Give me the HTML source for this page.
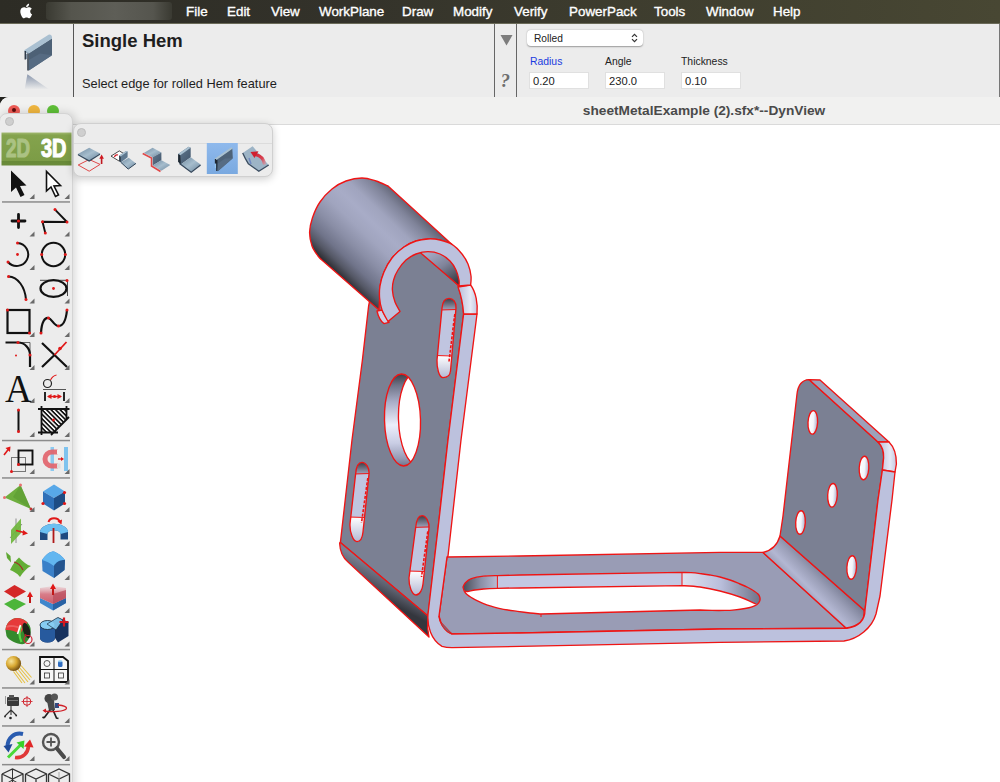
<!DOCTYPE html>
<html><head><meta charset="utf-8">
<style>
*{margin:0;padding:0;box-sizing:border-box}
html,body{width:1000px;height:782px;overflow:hidden;background:#fff;font-family:"Liberation Sans",sans-serif}
.abs{position:absolute}
#menubar{left:0;top:0;width:1000px;height:24px;background:linear-gradient(90deg,#2d2c25 0%,#33322a 35%,#3d3c2e 60%,#484733 100%);border-bottom:1px solid #6a6a58;color:#fff;font-size:13.400px;-webkit-text-stroke:0.350px #fff}
#menubar span{position:absolute;top:3.500px;white-space:nowrap}
#blur{left:46px;top:2px;width:126px;height:18px;background:linear-gradient(90deg,#3a3a32 0%,#55554d 20%,#5e5e57 55%,#55554e 85%,#3a3a32 100%);border-radius:3px}
#panel{left:0;top:24px;width:1000px;height:73px;background:#ececec}
#win{left:0;top:97px;width:1000px;height:685px;background:#fff;border-radius:9px 0 0 0;overflow:hidden}
#titlebar{left:0;top:0;width:1000px;height:28px;background:#f1f1f0;border-bottom:1px solid #dadada}
#title{left:404px;top:6px;width:600px;text-align:center;font-weight:bold;font-size:13.700px;color:#4a4a4a}
.tl{width:12px;height:12px;border-radius:6px;top:7.500px}
#lpal{left:-1px;top:112.500px;width:73.500px;height:680px;background:#ececec;border-radius:8px 8px 0 0;border:1px solid #d4d4d4;box-shadow:2px 0 10px rgba(0,0,0,.17)}
#spal{left:73px;top:123px;width:200px;height:54px;background:#ececec;border-radius:8px;border:1px solid #d0d0d0;box-shadow:0 2px 9px rgba(0,0,0,.2)}
.lbl{top:31.500px;font:10.400px "Liberation Sans",sans-serif;color:#222;white-space:nowrap}
.inp{top:48px;width:60px;height:17px;background:#fff;border:1px solid #e0e0e0;font:11.200px "Liberation Sans",sans-serif;color:#222;padding:2px 0 0 3px}
.dot{width:9px;height:9px;border-radius:5px;background:#cfcfcf;border:1px solid #bdbdbd}
</style></head><body>
<div id="menubar" class="abs">
<div id="blur" class="abs"></div>
<svg class="abs" style="left:19px;top:2px" width="16" height="18" viewBox="0 0 16 18"><path fill="#fff" d="M11.2 9.5c0-1.8 1.5-2.7 1.6-2.8-.9-1.3-2.200-1.400-2.700-1.500-1.100-.1-2.200.7-2.800.7-.6 0-1.500-.7-2.400-.6-1.200 0-2.400.7-3 1.800-1.300 2.200-.3 5.500.9 7.300.6.900 1.300 1.900 2.300 1.800.9 0 1.300-.6 2.400-.6 1.100 0 1.400.6 2.400.6 1 0 1.600-.9 2.200-1.800.7-1 1-2 1-2.100 0 0-1.900-.7-1.900-2.800zM9.400 4c.5-.6.800-1.400.7-2.300-.7 0-1.600.5-2.100 1.100-.5.500-.9 1.400-.8 2.200.800.100 1.700-.4 2.200-1z"/></svg>
<span style="left:186px">File</span><span style="left:227px">Edit</span><span style="left:271px">View</span><span style="left:319px">WorkPlane</span><span style="left:402px">Draw</span><span style="left:453px">Modify</span><span style="left:514px">Verify</span><span style="left:569px">PowerPack</span><span style="left:654px">Tools</span><span style="left:706px">Window</span><span style="left:773px">Help</span>
</div>
<div id="panel" class="abs">
<div class="abs" style="left:73px;top:0;width:1px;height:73px;background:#555"></div>
<div class="abs" style="left:999px;top:0;width:1px;height:73px;background:#777"></div>
<div class="abs" style="left:494px;top:0;width:1px;height:73px;background:#666"></div>
<div class="abs" style="left:516px;top:0;width:1px;height:73px;background:#666"></div>
<div class="abs" style="left:82px;top:5.700px;font:bold 18.5px 'Liberation Sans',sans-serif;color:#1e1e1e;white-space:nowrap">Single Hem</div>
<div class="abs" style="left:82px;top:51.700px;font:12.8px 'Liberation Sans',sans-serif;color:#1e1e1e;white-space:nowrap">Select edge for rolled Hem feature</div>
<svg class="abs" style="left:0;top:0" width="73" height="73" viewBox="0 0 73 73">
<defs><linearGradient id="refl" x1="0" y1="0" x2="0" y2="1"><stop offset="0" stop-color="#8a97ad"/><stop offset="1" stop-color="#ececec"/></linearGradient></defs>
<polygon points="28.800,29 52,14.300 52,31.200 28.800,46.600" fill="#4d6176"/>
<polygon points="28.800,36 40,29.500 52,31.200 28.800,46.600" fill="#566b82"/>
<path d="M24.600,27.300 L24.600,26 L48.500,10.800 Q51,10 52,12.500 L52,14.500 L28.800,29.500 L27.500,30 Z" fill="#aac0d1"/>
<path d="M24.600,27 L28.800,29.300" stroke="#8ea6ba" stroke-width="1"/>
<path d="M25.300,27 V35.500 M28,29.500 V46.500" stroke="#2e3a48" stroke-width="1.500" fill="none"/>
<path d="M26.700,30 V35" stroke="#6f8398" stroke-width="1"/>
<polygon points="27.400,50.200 49.300,65.500 24.600,65.500" fill="url(#refl)"/>
</svg>
<svg class="abs" style="left:500px;top:10px" width="13" height="12" viewBox="0 0 13 12"><polygon points="0.500,1 12.500,1 6.500,11.500" fill="#7d7d7d"/></svg>
<div class="abs" style="left:500.500px;top:45.500px;font:italic bold 19px 'Liberation Serif',serif;color:#6e6e6e">?</div>
<div class="abs" style="left:527px;top:6px;width:116px;height:16px;background:#fff;border-radius:4px;box-shadow:0 0.500px 1.500px rgba(0,0,0,.35)"></div>
<div class="abs" style="left:534px;top:8.500px;font:10.200px 'Liberation Sans',sans-serif;color:#222">Rolled</div>
<svg class="abs" style="left:631px;top:9px" width="7" height="10" viewBox="0 0 7 10"><path d="M1 3.800L3.500 1.300L6 3.800M1 6.200L3.500 8.700L6 6.200" stroke="#333" stroke-width="1.200" fill="none"/></svg>
<div class="abs lbl" style="left:530px;color:#1a3be0">Radius</div>
<div class="abs lbl" style="left:605px">Angle</div>
<div class="abs lbl" style="left:681px">Thickness</div>
<div class="abs inp" style="left:529px">0.20</div>
<div class="abs inp" style="left:605px">230.0</div>
<div class="abs inp" style="left:681px">0.10</div>
</div>
<div class="abs" style="left:0;top:97px;width:10px;height:10px;background:#23231f"></div>
<div id="win" class="abs">
<div id="titlebar" class="abs"></div>
<div id="title" class="abs">sheetMetalExample (2).sfx*--DynView</div>
<div class="abs tl" style="left:8px;background:#ee5b55"></div><div class="abs" style="left:12.200px;top:11.300px;width:3.400px;height:3.400px;border-radius:2px;background:#5c0c0c"></div>
<div class="abs tl" style="left:28px;background:#f0b63f"></div>
<div class="abs tl" style="left:47px;background:#5fc038"></div>
</div>
<!--MODEL--><svg class="abs" id="model" style="left:0;top:0" width="1000" height="782" viewBox="0 0 1000 782">
<defs>
<linearGradient id="gcyl" gradientUnits="userSpaceOnUse" x1="421" y1="216" x2="352" y2="288">
<stop offset="0" stop-color="#626576"/><stop offset="0.100" stop-color="#80849a"/><stop offset="0.250" stop-color="#a0a4be"/><stop offset="0.380" stop-color="#a8acc7"/><stop offset="0.520" stop-color="#a0a4be"/><stop offset="0.680" stop-color="#8a8ea6"/><stop offset="0.820" stop-color="#70748a"/><stop offset="0.910" stop-color="#555866"/><stop offset="0.970" stop-color="#3a3c44"/><stop offset="1" stop-color="#2c2d33"/></linearGradient>
<linearGradient id="gin" gradientUnits="userSpaceOnUse" x1="432" y1="250" x2="456" y2="286">
<stop offset="0" stop-color="#a6abc6"/><stop offset="0.450" stop-color="#7f8399"/><stop offset="1" stop-color="#2f3138"/></linearGradient>
<linearGradient id="gbendL" gradientUnits="userSpaceOnUse" x1="392" y1="575" x2="380" y2="598">
<stop offset="0" stop-color="#7b8093"/><stop offset="0.500" stop-color="#5c5f6d"/><stop offset="1" stop-color="#34363d"/></linearGradient>
<linearGradient id="gbendR" gradientUnits="userSpaceOnUse" x1="800" y1="594" x2="826" y2="568">
<stop offset="0" stop-color="#9497b0"/><stop offset="0.300" stop-color="#b3b7d2"/><stop offset="0.600" stop-color="#9a9eb7"/><stop offset="1" stop-color="#70748a"/></linearGradient>
<linearGradient id="ghole" x1="0" y1="0" x2="0" y2="1">
<stop offset="0" stop-color="#3c3e46"/><stop offset="0.120" stop-color="#6f7387"/><stop offset="0.300" stop-color="#a9adc7"/><stop offset="0.550" stop-color="#eceefa"/><stop offset="0.750" stop-color="#c9cde4"/><stop offset="0.920" stop-color="#9599b3"/><stop offset="1" stop-color="#70748a"/></linearGradient>
<linearGradient id="gslotcap" x1="0" y1="0" x2="0" y2="1">
<stop offset="0" stop-color="#3c3e46"/><stop offset="1" stop-color="#a0a4bd"/></linearGradient>
<linearGradient id="gslotbot" x1="0" y1="0" x2="0" y2="1">
<stop offset="0" stop-color="#ffffff"/><stop offset="1" stop-color="#b4b9d4"/></linearGradient>
<linearGradient id="gcorner" x1="0" y1="0" x2="1" y2="0">
<stop offset="0" stop-color="#b7bcd8"/><stop offset="0.650" stop-color="#e6e9f5"/><stop offset="1" stop-color="#c3c7e1"/></linearGradient>
<linearGradient id="gslotL" gradientUnits="userSpaceOnUse" x1="463" y1="0" x2="498" y2="0">
<stop offset="0" stop-color="#4a4c57"/><stop offset="0.500" stop-color="#8a8ea5"/><stop offset="1" stop-color="#b9bdd6"/></linearGradient>
<linearGradient id="gslotR" gradientUnits="userSpaceOnUse" x1="682" y1="0" x2="760" y2="0">
<stop offset="0" stop-color="#dfe2f0"/><stop offset="0.500" stop-color="#b9bedb"/><stop offset="1" stop-color="#6f7388"/></linearGradient>
<linearGradient id="ghs" x1="0" y1="0" x2="1" y2="0">
<stop offset="0" stop-color="#ffffff"/><stop offset="0.550" stop-color="#f4f5fa"/><stop offset="1" stop-color="#a9aeca"/></linearGradient>
</defs>
<path d="M419.0,249.0 L458.0,285.0 L461.0,296.0 L463.0,306.0 L463.6,314.0 L448.0,440.0 L439.0,520.0 L428.0,616.0 L340.4,542.4 L352.0,440.0 L362.4,360.0 L368.6,306.0 L372.0,290.0 L398.0,252.0 Z" fill="#7b8093" stroke="#ee1515" stroke-width="1.35" stroke-linejoin="round"/>
<g transform="rotate(-1.500 402.500 420)">
<ellipse cx="402.500" cy="420" rx="18" ry="46" fill="url(#ghole)"/>
<clipPath id="cph"><ellipse cx="402.500" cy="420" rx="18" ry="46"/></clipPath>
<ellipse cx="416.500" cy="419.500" rx="18" ry="46" fill="#fff" stroke="#ee1515" stroke-width="1.35" clip-path="url(#cph)"/>
<ellipse cx="402.500" cy="420" rx="18" ry="46" fill="none" stroke="#ee1515" stroke-width="1.35"/>
</g>
<clipPath id="cps1"><path d="M442.0,308.0 C442.5,302.0 445.0,298.4 449.0,298.4 C453.0,298.4 456.5,302.0 456.0,308.0 L450.5,371.0 C450.0,376.0 447.0,377.6 443.0,377.6 C439.0,377.6 436.7,368.0 437.0,360.0 Z"/></clipPath>
<path d="M442.0,308.0 C442.5,302.0 445.0,298.4 449.0,298.4 C453.0,298.4 456.5,302.0 456.0,308.0 L450.5,371.0 C450.0,376.0 447.0,377.6 443.0,377.6 C439.0,377.6 436.7,368.0 437.0,360.0 Z" fill="#c0c5e0"/>
<g clip-path="url(#cps1)">
<rect x="432.0" y="298.4" width="30" height="11.6" fill="url(#gslotcap)"/>
<rect x="432.0" y="355.5" width="30" height="22.1" fill="url(#gslotbot)"/>
<path d="M440.0,310.0 L458.0,309.5 M435.0,355.5 L452.5,356.0" stroke="#ee1515" stroke-width="1"/>
<path d="M454.8,314.0 L449.0,361.5" stroke="#ee1515" stroke-width="1.600" stroke-dasharray="3 1.500"/>
</g>
<path d="M442.0,308.0 C442.5,302.0 445.0,298.4 449.0,298.4 C453.0,298.4 456.5,302.0 456.0,308.0 L450.5,371.0 C450.0,376.0 447.0,377.6 443.0,377.6 C439.0,377.6 436.7,368.0 437.0,360.0 Z" fill="none" stroke="#ee1515" stroke-width="1.35"/>
<clipPath id="cps2"><path d="M355.6,474.0 C356.1,468.0 358.0,462.4 362.0,462.4 C366.0,462.4 369.5,468.0 369.0,474.0 L363.0,532.0 C362.5,537.0 361.0,541.6 357.0,541.6 C353.0,541.6 349.7,532.0 350.0,524.0 Z"/></clipPath>
<path d="M355.6,474.0 C356.1,468.0 358.0,462.4 362.0,462.4 C366.0,462.4 369.5,468.0 369.0,474.0 L363.0,532.0 C362.5,537.0 361.0,541.6 357.0,541.6 C353.0,541.6 349.7,532.0 350.0,524.0 Z" fill="#c0c5e0"/>
<g clip-path="url(#cps2)">
<rect x="345.0" y="462.4" width="30" height="11.6" fill="url(#gslotcap)"/>
<rect x="345.0" y="517.0" width="30" height="24.6" fill="url(#gslotbot)"/>
<path d="M353.6,474.0 L371.0,473.5 M348.0,517.0 L365.0,517.5" stroke="#ee1515" stroke-width="1"/>
<path d="M367.8,478.0 L361.5,523.0" stroke="#ee1515" stroke-width="1.600" stroke-dasharray="3 1.500"/>
</g>
<path d="M355.6,474.0 C356.1,468.0 358.0,462.4 362.0,462.4 C366.0,462.4 369.5,468.0 369.0,474.0 L363.0,532.0 C362.5,537.0 361.0,541.6 357.0,541.6 C353.0,541.6 349.7,532.0 350.0,524.0 Z" fill="none" stroke="#ee1515" stroke-width="1.35"/>
<clipPath id="cps3"><path d="M415.6,528.0 C416.1,522.0 418.0,515.6 422.0,515.6 C426.0,515.6 429.5,522.0 429.0,528.0 L423.0,584.0 C422.5,589.0 420.0,595.0 416.0,595.0 C412.0,595.0 408.7,586.0 409.0,578.0 Z"/></clipPath>
<path d="M415.6,528.0 C416.1,522.0 418.0,515.6 422.0,515.6 C426.0,515.6 429.5,522.0 429.0,528.0 L423.0,584.0 C422.5,589.0 420.0,595.0 416.0,595.0 C412.0,595.0 408.7,586.0 409.0,578.0 Z" fill="#c0c5e0"/>
<g clip-path="url(#cps3)">
<rect x="404.0" y="515.6" width="30" height="11.8" fill="url(#gslotcap)"/>
<rect x="404.0" y="571.0" width="30" height="24.0" fill="url(#gslotbot)"/>
<path d="M413.6,527.4 L431.0,526.9 M407.0,571.0 L425.0,571.5" stroke="#ee1515" stroke-width="1"/>
<path d="M427.8,531.4 L421.5,577.0" stroke="#ee1515" stroke-width="1.600" stroke-dasharray="3 1.500"/>
</g>
<path d="M415.6,528.0 C416.1,522.0 418.0,515.6 422.0,515.6 C426.0,515.6 429.5,522.0 429.0,528.0 L423.0,584.0 C422.5,589.0 420.0,595.0 416.0,595.0 C412.0,595.0 408.7,586.0 409.0,578.0 Z" fill="none" stroke="#ee1515" stroke-width="1.35"/>
<path d="M340.4,542.4 L428.0,616.0 L427.6,628.0 L429.0,637.0 L348,562 C343,558 340,551 339.600,543 Z" fill="url(#gbendL)" stroke="#ee1515" stroke-width="1.35" stroke-linejoin="round"/>
<path d="M447.0,557.0 L520.0,556.0 L720.0,552.4 L763.0,552.4 L846.0,628.0 L720.0,629.0 L520.0,633.0 L452.0,634.0 L442.0,626.0 L439.0,616.0 Z" fill="#999cb5" stroke="#ee1515" stroke-width="1.35" stroke-linejoin="round"/>
<path d="M463.0,587.0 C463.4,586.3 463.8,584.4 465.2,583.0 C466.6,581.6 468.3,579.8 471.4,578.7 C474.5,577.6 479.3,576.7 483.6,576.2 C487.9,575.7 495.1,575.7 497.4,575.6 L520,575 L682.0,572.4 C683.5,572.5 688.0,572.5 691.0,572.7 C694.0,572.9 696.8,573.2 700.0,573.6 C703.2,574.0 706.7,574.4 710.0,575.0 C713.3,575.6 716.7,576.2 720.0,577.0 C723.3,577.8 726.7,578.8 730.0,580.0 C733.3,581.2 737.0,582.8 740.0,584.0 C743.0,585.2 745.7,586.3 748.0,587.5 C750.3,588.7 752.2,589.8 754.0,591.0 C755.8,592.2 757.5,593.3 758.5,594.5 C759.5,595.7 759.8,596.8 760.0,598.0 C760.2,599.2 760.0,600.4 759.5,601.5 C759.0,602.6 758.2,603.6 757.0,604.5 C755.8,605.4 754.0,606.1 752.0,606.8 C750.0,607.5 747.8,608.0 745.0,608.5 C742.2,609.0 738.3,609.5 735.0,609.8 C731.7,610.1 728.8,610.3 725.0,610.4 C721.2,610.5 716.2,610.5 712.0,610.4 C707.8,610.3 702.0,610.1 700.0,610.0 L541.0,614.0 C539.2,613.8 533.9,613.5 530.0,613.0 C526.1,612.5 521.1,611.8 517.4,611.3 C513.7,610.8 511.1,610.5 508.0,610.0 C504.9,609.5 501.8,608.9 499.0,608.3 C496.2,607.7 493.6,607.0 491.0,606.2 C488.4,605.4 485.9,604.6 483.6,603.7 C481.3,602.8 479.1,601.7 477.0,600.7 C474.9,599.7 473.0,598.5 471.3,597.5 C469.6,596.5 468.1,595.5 467.0,594.5 C465.9,593.5 465.1,592.6 464.4,591.4 C463.7,590.1 463.2,587.7 463.0,587.0 Z" fill="#fff"/>
<clipPath id="cpbs"><path d="M463.0,587.0 C463.4,586.3 463.8,584.4 465.2,583.0 C466.6,581.6 468.3,579.8 471.4,578.7 C474.5,577.6 479.3,576.7 483.6,576.2 C487.9,575.7 495.1,575.7 497.4,575.6 L520,575 L682.0,572.4 C683.5,572.5 688.0,572.5 691.0,572.7 C694.0,572.9 696.8,573.2 700.0,573.6 C703.2,574.0 706.7,574.4 710.0,575.0 C713.3,575.6 716.7,576.2 720.0,577.0 C723.3,577.8 726.7,578.8 730.0,580.0 C733.3,581.2 737.0,582.8 740.0,584.0 C743.0,585.2 745.7,586.3 748.0,587.5 C750.3,588.7 752.2,589.8 754.0,591.0 C755.8,592.2 757.5,593.3 758.5,594.5 C759.5,595.7 759.8,596.8 760.0,598.0 C760.2,599.2 760.0,600.4 759.5,601.5 C759.0,602.6 758.2,603.6 757.0,604.5 C755.8,605.4 754.0,606.1 752.0,606.8 C750.0,607.5 747.8,608.0 745.0,608.5 C742.2,609.0 738.3,609.5 735.0,609.8 C731.7,610.1 728.8,610.3 725.0,610.4 C721.2,610.5 716.2,610.5 712.0,610.4 C707.8,610.3 702.0,610.1 700.0,610.0 L541.0,614.0 C539.2,613.8 533.9,613.5 530.0,613.0 C526.1,612.5 521.1,611.8 517.4,611.3 C513.7,610.8 511.1,610.5 508.0,610.0 C504.9,609.5 501.8,608.9 499.0,608.3 C496.2,607.7 493.6,607.0 491.0,606.2 C488.4,605.4 485.9,604.6 483.6,603.7 C481.3,602.8 479.1,601.7 477.0,600.7 C474.9,599.7 473.0,598.5 471.3,597.5 C469.6,596.5 468.1,595.5 467.0,594.5 C465.9,593.5 465.1,592.6 464.4,591.4 C463.7,590.1 463.2,587.7 463.0,587.0 Z"/></clipPath>
<path d="M463.0,587.0 C463.4,586.3 463.8,584.4 465.2,583.0 C466.6,581.6 468.3,579.8 471.4,578.7 C474.5,577.6 479.3,576.7 483.6,576.2 C487.9,575.7 495.1,575.7 497.4,575.6 L497.400,588.300 C495.1,588.4 487.3,588.7 483.6,589.0 C479.9,589.3 477.7,589.6 475.0,590.0 C472.3,590.4 469.2,591.3 467.5,591.5 C465.8,591.7 465.0,591.1 464.5,591.0 Z" fill="url(#gslotL)"/>
<path d="M497.400,575.600 L520,575 L682,572.400 L682,585.600 L520,588 L497.400,588.300 Z" fill="#c3c8e3"/>
<path d="M682.0,572.4 C683.5,572.5 688.0,572.5 691.0,572.7 C694.0,572.9 696.8,573.2 700.0,573.6 C703.2,574.0 706.7,574.4 710.0,575.0 C713.3,575.6 716.7,576.2 720.0,577.0 C723.3,577.8 726.7,578.8 730.0,580.0 C733.3,581.2 737.0,582.8 740.0,584.0 C743.0,585.2 745.7,586.3 748.0,587.5 C750.3,588.7 752.2,589.8 754.0,591.0 C755.8,592.2 757.5,593.3 758.5,594.5 C759.5,595.7 759.8,596.8 760.0,598.0 C760.2,599.2 760.0,600.4 759.5,601.5 C759.0,602.6 757.4,604.0 757.0,604.5 L756,604 C753.3,602.8 746.0,599.2 740.0,597.0 C734.0,594.8 726.7,592.7 720.0,591.0 C713.3,589.3 706.3,587.9 700.0,587.0 C693.7,586.1 685.0,585.8 682.0,585.6 Z" fill="url(#gslotR)"/>
<path d="M464.5,591.0 C465.0,591.1 465.8,591.7 467.5,591.5 C469.2,591.3 472.3,590.4 475.0,590.0 C477.7,589.6 479.9,589.3 483.6,589.0 C487.3,588.7 491.3,588.5 497.4,588.3 C503.5,588.1 516.2,588.0 520.0,588.0 L682.0,585.6 C685.0,585.8 693.7,586.1 700.0,587.0 C706.3,587.9 713.3,589.3 720.0,591.0 C726.7,592.7 734.0,594.8 740.0,597.0 C746.0,599.2 753.3,602.8 756.0,604.0" fill="none" stroke="#ee1515" stroke-width="1.35" clip-path="url(#cpbs)"/>
<path d="M497.400,575.600 L497.400,588.300 M682,572.400 L682,585.600 M541,614 L541,617" fill="none" stroke="#ee1515" stroke-width="1"/>
<path d="M463.0,587.0 C463.4,586.3 463.8,584.4 465.2,583.0 C466.6,581.6 468.3,579.8 471.4,578.7 C474.5,577.6 479.3,576.7 483.6,576.2 C487.9,575.7 495.1,575.7 497.4,575.6 L520,575 L682.0,572.4 C683.5,572.5 688.0,572.5 691.0,572.7 C694.0,572.9 696.8,573.2 700.0,573.6 C703.2,574.0 706.7,574.4 710.0,575.0 C713.3,575.6 716.7,576.2 720.0,577.0 C723.3,577.8 726.7,578.8 730.0,580.0 C733.3,581.2 737.0,582.8 740.0,584.0 C743.0,585.2 745.7,586.3 748.0,587.5 C750.3,588.7 752.2,589.8 754.0,591.0 C755.8,592.2 757.5,593.3 758.5,594.5 C759.5,595.7 759.8,596.8 760.0,598.0 C760.2,599.2 760.0,600.4 759.5,601.5 C759.0,602.6 758.2,603.6 757.0,604.5 C755.8,605.4 754.0,606.1 752.0,606.8 C750.0,607.5 747.8,608.0 745.0,608.5 C742.2,609.0 738.3,609.5 735.0,609.8 C731.7,610.1 728.8,610.3 725.0,610.4 C721.2,610.5 716.2,610.5 712.0,610.4 C707.8,610.3 702.0,610.1 700.0,610.0 L541.0,614.0 C539.2,613.8 533.9,613.5 530.0,613.0 C526.1,612.5 521.1,611.8 517.4,611.3 C513.7,610.8 511.1,610.5 508.0,610.0 C504.9,609.5 501.8,608.9 499.0,608.3 C496.2,607.7 493.6,607.0 491.0,606.2 C488.4,605.4 485.9,604.6 483.6,603.7 C481.3,602.8 479.1,601.7 477.0,600.7 C474.9,599.7 473.0,598.5 471.3,597.5 C469.6,596.5 468.1,595.5 467.0,594.5 C465.9,593.5 465.1,592.6 464.4,591.4 C463.7,590.1 463.2,587.7 463.0,587.0 Z" fill="none" stroke="#ee1515" stroke-width="1.35"/>
<path d="M763,552.400 C770,551 777,546 780,536 L864,610 C865,618 861,626 846,628 Z" fill="url(#gbendR)" stroke="#ee1515" stroke-width="1.35" stroke-linejoin="round"/>
<path d="M780,536 L783,516 L797,394 C798,385 802,380 809,379.600 L878,442 C882,446 884,452 883.600,458 L882.400,470 L878,500 L865,610 L864,610 Z" fill="#7b8093" stroke="#ee1515" stroke-width="1.35" stroke-linejoin="round"/>
<path d="M809,379.600 L820,380 L889,442 L878,442 Z" fill="#9da1ba" stroke="#ee1515" stroke-width="1.35" stroke-linejoin="round"/>
<path d="M878,442 L889,442 C894,447 896.500,455 896.400,464 L895,472 L882.400,470 L883.600,458 C884,452 882,446 878,442 Z" fill="url(#gcorner)" stroke="#ee1515" stroke-width="1.35" stroke-linejoin="round"/>
<ellipse cx="812.8" cy="422.4" rx="4.800" ry="11.800" fill="url(#ghs)" stroke="#ee1515" stroke-width="1.35" transform="rotate(3 812.8 422.4)"/>
<ellipse cx="864.0" cy="468.0" rx="4.800" ry="11.800" fill="url(#ghs)" stroke="#ee1515" stroke-width="1.35" transform="rotate(3 864.0 468.0)"/>
<ellipse cx="832.5" cy="495.3" rx="4.800" ry="11.800" fill="url(#ghs)" stroke="#ee1515" stroke-width="1.35" transform="rotate(3 832.5 495.3)"/>
<ellipse cx="800.5" cy="522.5" rx="4.800" ry="11.800" fill="url(#ghs)" stroke="#ee1515" stroke-width="1.35" transform="rotate(3 800.5 522.5)"/>
<ellipse cx="851.7" cy="567.5" rx="4.800" ry="11.800" fill="url(#ghs)" stroke="#ee1515" stroke-width="1.35" transform="rotate(3 851.7 567.5)"/>
<path d="M463.600,314 L448,440 L439,520 L428,614 C427,626 431,640 442,646.400 C446,647.500 449,647.600 452,647.600 L520,646.400 L720,642.400 L844,641 C858,639 872,628 876,614 L880,596 L892,500 L895,472 L882.400,470 L878,500 L865,610 C865,618 861,626 847,628.400 L720,629 L520,633 L452,634 C446,632 440,625 439,616 L447,557 L448,556 L461,440 L477,314 Z" fill="#bcc1dd" stroke="#ee1515" stroke-width="1.35" stroke-linejoin="round"/>
<path d="M439,616 C440,625 446,632 452,634 L440,621 Z" fill="#6d7083" stroke="#ee1515" stroke-width="0.800"/>
<path d="M458,287 C461,295 463,305 463.600,314 L477,314 C478,304 476,292 470.600,285 Z" fill="url(#gcorner)" stroke="#ee1515" stroke-width="1.35" stroke-linejoin="round"/>
<path d="M388.0,186.0 C386.0,185.2 380.3,182.3 376.0,181.0 C371.7,179.7 367.0,178.0 362.0,178.0 C357.0,178.0 351.0,179.2 346.0,181.0 C341.0,182.8 336.3,185.5 332.0,189.0 C327.7,192.5 323.3,197.2 320.0,202.0 C316.7,206.8 314.1,213.0 312.4,218.0 C310.7,223.0 309.7,227.3 309.6,232.0 C309.5,236.7 310.6,242.0 312.0,246.0 C313.4,250.0 316.2,253.5 318.0,256.0 C319.8,258.5 322.2,260.2 323.0,261.0 L379.0,310.0 L379.6,298.0 C379.7,296.0 379.3,290.3 380.0,286.0 C380.7,281.7 382.0,276.7 384.0,272.0 C386.0,267.3 388.7,262.2 392.0,258.0 C395.3,253.8 400.0,249.8 404.0,247.0 C408.0,244.2 412.0,242.3 416.0,241.0 C420.0,239.7 424.0,239.2 428.0,239.0 C432.0,238.8 436.0,239.1 440.0,240.0 C444.0,240.9 450.0,243.7 452.0,244.4 Z" fill="url(#gcyl)" stroke="#ee1515" stroke-width="1.35" stroke-linejoin="round"/>
<path d="M377,311 C378,316 381,322 384,323.600 L389,322.400 L382,310 Z" fill="#cdd1e8" stroke="#ee1515" stroke-width="1.35" stroke-linejoin="round"/>
<path d="M419,251.500 L458,285 L465,285 L465,278 L461,266 L455,256 L442,247 L428,245 L418,247 Z" fill="url(#gin)" stroke="#ee1515" stroke-width="1.35" stroke-linejoin="round"/>
<path d="M388.0,321.4 C387.0,319.5 383.4,313.9 382.0,310.0 C380.6,306.1 379.9,302.0 379.6,298.0 C379.3,294.0 379.3,290.3 380.0,286.0 C380.7,281.7 382.0,276.7 384.0,272.0 C386.0,267.3 388.7,262.2 392.0,258.0 C395.3,253.8 400.0,249.8 404.0,247.0 C408.0,244.2 412.0,242.3 416.0,241.0 C420.0,239.7 424.0,239.2 428.0,239.0 C432.0,238.8 436.0,239.1 440.0,240.0 C444.0,240.9 448.3,242.1 452.0,244.4 C455.7,246.7 459.3,250.7 462.0,254.0 C464.7,257.3 466.5,260.3 468.0,264.0 C469.5,267.7 470.6,272.5 471.0,276.0 C471.4,279.5 470.7,283.5 470.6,285.0 L459.0,286.0 C459.0,285.0 459.5,282.7 459.0,280.0 C458.5,277.3 457.5,273.2 456.0,270.0 C454.5,266.8 452.7,263.7 450.0,261.0 C447.3,258.3 443.7,255.6 440.0,254.0 C436.3,252.4 432.0,251.6 428.0,251.6 C424.0,251.6 419.7,252.6 416.0,254.0 C412.3,255.4 409.0,257.3 406.0,260.0 C403.0,262.7 400.1,266.7 398.0,270.0 C395.9,273.3 394.5,276.7 393.6,280.0 C392.7,283.3 392.2,286.3 392.4,290.0 C392.6,293.7 393.7,298.4 395.0,302.0 C396.3,305.6 399.2,309.8 400.0,311.4 Z" fill="#bcc1dd" stroke="#ee1515" stroke-width="1.35" stroke-linejoin="round"/>
</svg><!--/MODEL-->
<div id="lpal" class="abs"></div>
<div class="abs dot" style="left:5px;top:117px"></div>
<!--PAL--><svg class="abs" style="left:0;top:0" width="80" height="782" viewBox="0 0 80 782">
<defs>
<linearGradient id="g23" x1="0" y1="0" x2="0" y2="1"><stop offset="0" stop-color="#a3ba72"/><stop offset="0.080" stop-color="#84a34d"/><stop offset="0.860" stop-color="#7c9c46"/><stop offset="0.870" stop-color="#688a38"/><stop offset="1" stop-color="#6b8c3b"/></linearGradient>
<linearGradient id="gpink" x1="0" y1="0" x2="0" y2="1"><stop offset="0" stop-color="#e6a0aa" stop-opacity="0.250"/><stop offset="0.450" stop-color="#d46a78" stop-opacity="0.850"/><stop offset="1" stop-color="#cc5a6a"/></linearGradient>
<radialGradient id="ggold" cx="0.350" cy="0.350" r="0.700"><stop offset="0" stop-color="#f6e39a"/><stop offset="0.500" stop-color="#d9a932"/><stop offset="1" stop-color="#6e4a10"/></radialGradient>
<pattern id="hatch" width="3.200" height="3.200" patternUnits="userSpaceOnUse" patternTransform="rotate(45)"><rect width="3.200" height="3.200" fill="#fff"/><rect width="3.200" height="1.700" fill="#111"/></pattern>
</defs>
<rect x="1.500" y="132.500" width="70" height="33" fill="url(#g23)"/>
<text x="6" y="157" font-family="Liberation Sans, sans-serif" font-weight="bold" font-size="25" fill="#abc283" stroke="#abc283" stroke-width="1.100" stroke-linejoin="round" textLength="24" lengthAdjust="spacingAndGlyphs">2D</text>
<text x="41" y="157" font-family="Liberation Sans, sans-serif" font-weight="bold" font-size="25" fill="#ffffff" stroke="#ffffff" stroke-width="1.100" stroke-linejoin="round" textLength="25.500" lengthAdjust="spacingAndGlyphs">3D</text>
<path d="M11,170.500 L11,192 L16,187.500 L20.500,197 L24.500,195 L20,186 L26.500,185.500 Z" fill="#111"/>
<path d="M46.500,171.500 L46.500,191 L51,187 L55.500,196.500 L58.500,195 L54,186 L60.500,185.500 Z" fill="#fff" stroke="#111" stroke-width="1.600" stroke-linejoin="miter"/>
<polygon points="29.5,199.0 34.5,199.0 34.5,194.0" fill="#6a6a6a"/>
<polygon points="64.5,199.0 69.5,199.0 69.5,194.0" fill="#6a6a6a"/>
<rect x="2" y="201.2" width="68" height="1.500" fill="#8c8c8c"/>
<path d="M18.500,214.500 V227.500 M12,221 H25" stroke="#111" stroke-width="2.800" stroke-linecap="round"/>
<circle cx="18.5" cy="221.0" r="1.6" fill="#e01818"/>
<path d="M55,209.600 L67,222 L42.500,221.700 L45.300,233" fill="none" stroke="#111" stroke-width="1.900" stroke-linejoin="round"/>
<circle cx="55.0" cy="209.6" r="1.5" fill="#e01818"/>
<circle cx="67.0" cy="222.0" r="1.5" fill="#e01818"/>
<circle cx="42.5" cy="221.7" r="1.5" fill="#e01818"/>
<circle cx="45.3" cy="233.0" r="1.5" fill="#e01818"/>
<polygon points="29.5,236.5 34.5,236.5 34.5,231.5" fill="#6a6a6a"/>
<polygon points="64.5,236.5 69.5,236.5 69.5,231.5" fill="#6a6a6a"/>
<path d="M17.500,243 A11.500,11.500 0 1 1 8,262" fill="none" stroke="#111" stroke-width="2"/>
<circle cx="17.5" cy="243.0" r="1.5" fill="#e01818"/>
<circle cx="17.5" cy="254.5" r="1.4" fill="#e01818"/>
<circle cx="8.0" cy="262.0" r="1.5" fill="#e01818"/>
<circle cx="53.500" cy="254.500" r="11.700" fill="none" stroke="#111" stroke-width="2"/>
<circle cx="41.7" cy="254.5" r="1.5" fill="#e01818"/>
<circle cx="65.3" cy="254.5" r="1.5" fill="#e01818"/>
<polygon points="29.5,270.0 34.5,270.0 34.5,265.0" fill="#6a6a6a"/>
<polygon points="64.5,270.0 69.5,270.0 69.5,265.0" fill="#6a6a6a"/>
<path d="M8.500,276.500 C18,277 25,287 26,299.500" fill="none" stroke="#111" stroke-width="2"/>
<circle cx="8.5" cy="276.5" r="1.5" fill="#e01818"/>
<circle cx="26.0" cy="299.5" r="1.5" fill="#e01818"/>
<path d="M40,280.300 H67.500 V296" fill="none" stroke="#333" stroke-width="0.900"/>
<ellipse cx="53.500" cy="288.500" rx="13" ry="8.300" fill="none" stroke="#111" stroke-width="2.200"/>
<circle cx="53.5" cy="288.5" r="1.4" fill="#e01818"/>
<circle cx="67.0" cy="280.5" r="1.5" fill="#e01818"/>
<polygon points="29.5,303.5 34.5,303.5 34.5,298.5" fill="#6a6a6a"/>
<polygon points="64.5,303.5 69.5,303.5 69.5,298.5" fill="#6a6a6a"/>
<rect x="7.500" y="310" width="22" height="23" fill="none" stroke="#111" stroke-width="2.200"/>
<circle cx="7.5" cy="310.0" r="1.5" fill="#e01818"/>
<circle cx="29.5" cy="333.0" r="1.5" fill="#e01818"/>
<path d="M41,333 C41.500,322 45,317 48.500,318 C52,319 54,326 58.500,326 C63,326 66,320 67,310" fill="none" stroke="#111" stroke-width="2.200"/>
<circle cx="41.0" cy="333.0" r="1.5" fill="#e01818"/>
<circle cx="48.5" cy="318.0" r="1.5" fill="#e01818"/>
<circle cx="58.5" cy="326.0" r="1.5" fill="#e01818"/>
<circle cx="67.0" cy="310.0" r="1.5" fill="#e01818"/>
<polygon points="29.5,337.0 34.5,337.0 34.5,332.0" fill="#6a6a6a"/>
<polygon points="64.5,337.0 69.5,337.0 69.5,332.0" fill="#6a6a6a"/>
<path d="M18,342.500 H30 V355" fill="none" stroke="#555" stroke-width="0.900"/>
<path d="M5.500,342.500 H18 A12,12.500 0 0 1 30,355 V367" fill="none" stroke="#111" stroke-width="2.200"/>
<circle cx="18.0" cy="342.5" r="1.5" fill="#e01818"/>
<circle cx="30.0" cy="355.0" r="1.5" fill="#e01818"/>
<circle cx="16.0" cy="355.5" r="1.0" fill="#e01818"/>
<path d="M42,343 L67,367 M42,367 L54.500,355" stroke="#111" stroke-width="2.200"/>
<path d="M54.500,355 L66.500,342" stroke="#e01818" stroke-width="1.800"/>
<circle cx="60.0" cy="348.5" r="1.8" fill="#e01818"/>
<polygon points="29.5,370.0 34.5,370.0 34.5,365.0" fill="#6a6a6a"/>
<polygon points="64.5,370.0 69.5,370.0 69.5,365.0" fill="#6a6a6a"/>
<text x="5" y="402" font-family="Liberation Serif, serif" font-size="39" fill="#111" textLength="27" lengthAdjust="spacingAndGlyphs">A</text>
<circle cx="47.500" cy="383.500" r="4" fill="none" stroke="#222" stroke-width="1.200"/>
<path d="M50.500,380 C52,377 54,375.500 56.500,375" fill="none" stroke="#e01818" stroke-width="1.100"/>
<path d="M43,389.500 H66" stroke="#555" stroke-width="1"/>
<path d="M45,392 V401 M64,392 V401" stroke="#111" stroke-width="1.800"/>
<path d="M48,396.500 H61" stroke="#e01818" stroke-width="1.400"/>
<polygon points="47,396.500 51.500,394 51.500,399" fill="#e01818"/><polygon points="62,396.500 57.500,394 57.500,399" fill="#e01818"/>
<circle cx="54.5" cy="396.5" r="1.6" fill="#e01818"/>
<polygon points="29.5,403.0 34.5,403.0 34.5,398.0" fill="#6a6a6a"/>
<polygon points="64.5,403.0 69.5,403.0 69.5,398.0" fill="#6a6a6a"/>
<path d="M18.500,410 V431.500" stroke="#111" stroke-width="2"/>
<circle cx="18.5" cy="410.0" r="1.5" fill="#e01818"/>
<circle cx="18.5" cy="431.5" r="1.5" fill="#e01818"/>
<polygon points="41.500,409 66.500,409 66.500,419 53,432.500 41.500,432.500" fill="url(#hatch)"/>
<path d="M41.500,406 V435 M66.500,406 V420 M38,409 H69.500 M38,432.500 H58 M51,435 L69,417" stroke="#111" stroke-width="1.800" fill="none"/>
<circle cx="53.5" cy="420.0" r="1.4" fill="#e01818"/>
<polygon points="29.5,437.0 34.5,437.0 34.5,432.0" fill="#6a6a6a"/>
<polygon points="64.5,437.0 69.5,437.0 69.5,432.0" fill="#6a6a6a"/>
<rect x="2" y="439.8" width="68" height="1.500" fill="#8c8c8c"/>
<path d="M4,455 L9,448.500" stroke="#e01818" stroke-width="1.600"/><polygon points="10.500,446.500 10,452 5.500,448" fill="#e01818"/>
<rect x="11.500" y="457.500" width="14" height="14" fill="none" stroke="#777" stroke-width="1"/>
<rect x="18.500" y="450.500" width="14" height="14" fill="none" stroke="#111" stroke-width="1.900"/>
<circle cx="18.5" cy="464.5" r="1.5" fill="#e01818"/>
<circle cx="11.5" cy="471.5" r="1.5" fill="#e01818"/>
<rect x="50.500" y="447" width="3.500" height="24" fill="#8ccaf0"/><rect x="64" y="447" width="4" height="24" fill="#7fc3ee"/>
<path d="M58,449.500 H52 A9.500,9.500 0 0 0 52,468.500 H58 V463.500 H52 A4.500,4.500 0 0 1 52,454.500 H58 Z" fill="#e2646c" opacity="0.920"/>
<rect x="57" y="449.500" width="3.500" height="5" fill="#f2f2f2"/><rect x="57" y="463.500" width="3.500" height="5" fill="#ddd"/>
<path d="M58,459 H62" stroke="#e01818" stroke-width="1.200"/><polygon points="64,459 61,457 61,461" fill="#e01818"/>
<polygon points="29.5,474.0 34.5,474.0 34.5,469.0" fill="#6a6a6a"/>
<polygon points="64.5,474.0 69.5,474.0 69.5,469.0" fill="#6a6a6a"/>
<rect x="2" y="477.2" width="68" height="1.500" fill="#8c8c8c"/>
<polygon points="20.500,485 4.500,497.500 31,509" fill="#6eae3e"/><polygon points="20.500,485 13,497 31,509" fill="#5a9a32" opacity="0.600"/>
<circle cx="20.5" cy="485.0" r="1.5" fill="#e87070"/>
<circle cx="4.5" cy="497.5" r="1.5" fill="#e87070"/>
<circle cx="31.0" cy="509.0" r="1.5" fill="#c83030"/>
<polygon points="54,484.500 65,491.500 54,498 43,491.500" fill="#58a8e8"/><polygon points="43,491.500 54,498 54,510.500 43,503.500" fill="#2f70b8"/><polygon points="65,491.500 54,498 54,510.500 65,503.500" fill="#1e4c84"/>
<circle cx="64.5" cy="492.5" r="1.6" fill="#e01818"/>
<circle cx="64.5" cy="503.5" r="1.6" fill="#e01818"/>
<circle cx="43.0" cy="503.5" r="1.6" fill="#e01818"/>
<polygon points="29.5,512.0 34.5,512.0 34.5,507.0" fill="#6a6a6a"/>
<polygon points="64.5,512.0 69.5,512.0 69.5,507.0" fill="#6a6a6a"/>
<path d="M16,518.500 V543 M10,538 L22,524" stroke="#777" stroke-width="0.800"/>
<polygon points="11,530 21,518.500 21,533 11,544" fill="#6eb53c" opacity="0.920"/>
<path d="M16,530.500 L24,532.500" stroke="#e01818" stroke-width="1.800"/><polygon points="28,533.500 23,530 22.500,535.500" fill="#e01818"/>
<path d="M40,532 A13.500,8 0 0 1 68,532 V539.500 H60.500 V534 A6,3.500 0 0 0 47.500,534 V540 H40 Z" fill="#1f4a80"/>
<path d="M40,532 A13.500,8 0 0 1 68,532 L60.500,534 A6,3.500 0 0 0 47.500,534 Z" fill="#6cc0f2"/>
<path d="M53.500,528 V543" stroke="#b01818" stroke-width="1.800"/>
<path d="M48.500,522 C50,517 58,517 60,522" fill="none" stroke="#e01818" stroke-width="2"/><polygon points="61.500,524.500 57.500,521.500 62,519.500" fill="#e01818"/>
<polygon points="29.5,546.0 34.5,546.0 34.5,541.0" fill="#6a6a6a"/>
<polygon points="64.5,546.0 69.5,546.0 69.5,541.0" fill="#6a6a6a"/>
<polygon points="6,552 10.500,556 11,562.500 7,558" fill="#5fa832"/>
<path d="M10,570 C13,564 16,560 19,557.500 C23,562 27,565 31,566 C27,568 23,572 20,577 C17,573 13,571 10,570 Z" fill="#64ae36"/>
<path d="M14,562 C18,563 21,566 23,570" fill="none" stroke="#a03028" stroke-width="1.200"/>
<path d="M42,560 C46,554 50,551.500 54,551.500 C58,553 62,556 65,560 L64.500,570 L54,578 L42.500,571 Z" fill="#3a80c8"/>
<path d="M42,560 C46,554 50,551.500 54,551.500 C58,553 62,556 65,560 C60,560 56,562 54,566 C50,563 46,561 42,560 Z" fill="#62b6f0"/>
<path d="M54,566 C56,562 60,560 65,560 L64.500,570 L54,578 Z" fill="#24548e"/>
<polygon points="29.5,580.0 34.5,580.0 34.5,575.0" fill="#6a6a6a"/>
<polygon points="64.5,580.0 69.5,580.0 69.5,575.0" fill="#6a6a6a"/>
<polygon points="4,591.500 14.500,585 26,591.500 14.500,598" fill="#d42828"/><polygon points="4,604 14.500,598.500 26,604 14.500,610.500" fill="#4cb53a"/>
<path d="M30,603 V596" stroke="#c01818" stroke-width="2"/><polygon points="30,591.500 27,597 33,597" fill="#e01818"/>
<polygon points="40,598 53,604 66,598 66,603 53,610.500 40,603" fill="#3f86cc"/><polygon points="53,604 66,598 66,603 53,610.500" fill="#2a62a4"/>
<polygon points="40,588 53,586 66,588 66,598 53,604 40,598" fill="url(#gpink)"/><polygon points="53,594 66,590 66,598 53,604" fill="#b84858" opacity="0.700"/>
<path d="M53,595 V588" stroke="#c01818" stroke-width="2"/><polygon points="53,583.500 50,589 56,589" fill="#e01818"/>
<polygon points="29.5,613.0 34.5,613.0 34.5,608.0" fill="#6a6a6a"/>
<polygon points="64.5,613.0 69.5,613.0 69.5,608.0" fill="#6a6a6a"/>
<path d="M5.500,630 C6,623 11,618.500 17,618 C23,618 29,622 30.500,628 C31.500,634 29,641 24,644 C19,645 9,641 6.500,636 Z" fill="#358a2c"/>
<path d="M5.500,630 C6,623 11,618.500 17,618 C21,618 25,620 27.500,622.500 L20,634 C15,630.500 9,629.500 5.500,630 Z" fill="#e63a3a"/>
<path d="M6.500,627 C10,625 17,626 22,629" fill="none" stroke="#f07070" stroke-width="2" opacity="0.700"/>
<ellipse cx="26.500" cy="630.500" rx="3.400" ry="8" fill="#1c2418" transform="rotate(-18 26.500 630.500)"/>
<path d="M21,626 C19,631 19,637 21.500,642" fill="none" stroke="#5ad848" stroke-width="2.200"/>
<path d="M20.500,625 L17.500,634" stroke="#ffffff" stroke-width="1.600"/>
<circle cx="28" cy="639.500" r="4" fill="none" stroke="#d02838" stroke-width="1.200"/><circle cx="25.500" cy="635" r="1.100" fill="#b01828"/>
<path d="M40,625 V638 A7.500,4.500 0 0 0 55,638 L58,642.500 L68.500,636 V622 L58,617.500 L52,621 Z" fill="#17325e"/>
<path d="M40,625 V638 A7.500,4.500 0 0 0 55,638 V625 Z" fill="#275a9e"/>
<ellipse cx="47.500" cy="625" rx="7.500" ry="4.500" fill="#86ccf2" stroke="#123" stroke-width="0.800"/>
<polygon points="47,624 56,618.500 58,617.500 63,620 56,630" fill="#86ccf2" opacity="0.900" stroke="#123" stroke-width="0.700"/>
<path d="M64,617.500 V626.500 M59.500,622 H68.500" stroke="#d01820" stroke-width="2.200"/>
<polygon points="29.5,646.5 34.5,646.5 34.5,641.5" fill="#6a6a6a"/>
<polygon points="64.5,646.5 69.5,646.5 69.5,641.5" fill="#6a6a6a"/>
<rect x="2" y="648.8" width="68" height="1.500" fill="#8c8c8c"/>
<path d="M17,668 L28,682 M19,667 L30,680 M15,670 L25,683 M21,665.500 L31.500,677.500 M13.500,671.500 L22,683" stroke="#e6c044" stroke-width="1.100"/>
<circle cx="13.500" cy="663.500" r="7.600" fill="url(#ggold)"/>
<path d="M40,657 H63 L68,661 V682 H40 Z" fill="#f6f6f6" stroke="#111" stroke-width="1.800"/><path d="M54,657 V682 M40,669.500 H68" stroke="#111" stroke-width="1"/>
<circle cx="47" cy="663.500" r="3" fill="none" stroke="#333" stroke-width="0.800"/><rect x="58" y="661" width="4.500" height="6" rx="1.500" fill="#2f6cc0"/><ellipse cx="60.200" cy="661.300" rx="2.200" ry="1" fill="#8cc8f0"/>
<rect x="44.500" y="673" width="5" height="5" fill="none" stroke="#333" stroke-width="0.800"/><rect x="58.500" y="673" width="5" height="5" fill="none" stroke="#333" stroke-width="0.800"/>
<polygon points="29.5,684.5 34.5,684.5 34.5,679.5" fill="#6a6a6a"/>
<polygon points="64.5,684.5 69.5,684.5 69.5,679.5" fill="#6a6a6a"/>
<rect x="2" y="687.2" width="68" height="1.500" fill="#8c8c8c"/>
<rect x="7" y="697" width="12" height="9" rx="1" fill="#3a3a3a"/><rect x="9" y="695" width="5" height="3" fill="#555"/><rect x="8" y="700" width="10" height="1" fill="#777"/><path d="M5.500,696 V704" stroke="#888" stroke-width="0.800"/>
<path d="M11,706 V715 M11,710 L5,716 M11,710 L16,715" stroke="#333" stroke-width="1.100" fill="none"/><circle cx="10.500" cy="718" r="1.300" fill="#222"/><circle cx="5" cy="716.500" r="0.900" fill="#222"/><circle cx="16.200" cy="715.500" r="0.900" fill="#222"/>
<circle cx="27" cy="701.500" r="3.800" fill="none" stroke="#d02028" stroke-width="1"/><path d="M27,696 V707 M21.500,701.500 H32.500" stroke="#d02028" stroke-width="0.800"/>
<circle cx="49" cy="698.500" r="4.500" fill="#444"/><circle cx="54.500" cy="697" r="3.500" fill="#555"/><path d="M47,701 L54,700 L55,710 L49,711 Z" fill="#4a4a4a"/><rect x="55" y="703" width="4" height="5" fill="#334a80"/>
<path d="M50,710 L44,718 M53,710 L56.500,718 L58.500,718.500 M44,718 L42.500,717" stroke="#222" stroke-width="1.700" fill="none"/>
<path d="M58,705 C64,705.500 67,707 66.500,708.500 C65,711.500 52,712.500 44,711" fill="none" stroke="#d02028" stroke-width="1.300"/><polygon points="42.500,710.500 46,708.500 46,713" fill="#d02028"/>
<polygon points="29.5,723.0 34.5,723.0 34.5,718.0" fill="#6a6a6a"/>
<polygon points="64.5,723.0 69.5,723.0 69.5,718.0" fill="#6a6a6a"/>
<rect x="2" y="725.2" width="68" height="1.500" fill="#8c8c8c"/>
<path d="M23,734 C14,732 8,738 7.500,746" fill="none" stroke="#2a5cb0" stroke-width="4"/><polygon points="3.500,746 12.500,744 8.500,752.500" fill="#1f4a98"/>
<path d="M15,757.500 C23,758.500 28,753 28.500,746" fill="none" stroke="#e03838" stroke-width="3.600"/><polygon points="24,746.500 30,739.500 33.500,747.500" fill="#e02828"/>
<path d="M8,757.500 L20.500,745" stroke="#4ad838" stroke-width="3"/><polygon points="24.500,740.500 23.500,749 16.500,742.500" fill="#38d028"/>
<circle cx="51" cy="742" r="8" fill="none" stroke="#555" stroke-width="2.400"/><path d="M51,737.500 V746.500 M46.500,742 H55.500" stroke="#555" stroke-width="1.800"/><path d="M57,748.500 L64,757" stroke="#4a4a4a" stroke-width="4.200" stroke-linecap="round"/>
<polygon points="29.5,761.0 34.5,761.0 34.5,756.0" fill="#6a6a6a"/>
<polygon points="64.5,761.0 69.5,761.0 69.5,756.0" fill="#6a6a6a"/>
<rect x="2" y="763.9" width="68" height="1.500" fill="#8c8c8c"/>
<path d="M2.0,774 L12.5,769 L23.0,774 V786 M2.0,774 V786 M2.0,774 L12.5,779 L23.0,774 M12.5,779 V790" fill="none" stroke="#333" stroke-width="1.300"/>
<path d="M25.5,774 L36.0,769 L46.5,774 V786 M25.5,774 V786 M25.5,774 L36.0,779 L46.5,774 M36.0,779 V790" fill="none" stroke="#333" stroke-width="1.300"/>
<path d="M48.5,774 L59.0,769 L69.5,774 V786 M48.5,774 V786 M48.5,774 L59.0,779 L69.5,774 M59.0,779 V790" fill="none" stroke="#333" stroke-width="1.300"/>
<path d="M12.500,769 V782 M2,786 L12.500,780 L23,786" fill="none" stroke="#333" stroke-width="1"/>
<path d="M59,772 V782" fill="none" stroke="#999" stroke-width="0.800"/>
</svg><!--/PAL-->
<div id="spal" class="abs"><div class="abs" style="left:0;top:19px;width:198px;height:1px;background:#dcdcdc"></div></div>
<div class="abs dot" style="left:77px;top:128px"></div>
<!--SPAL--><svg class="abs" style="left:0;top:0" width="300" height="200" viewBox="0 0 300 200">
<defs>
<linearGradient id="st1" x1="0" y1="0" x2="1" y2="1"><stop offset="0" stop-color="#6f8aa0"/><stop offset="0.500" stop-color="#a6bdcd"/><stop offset="1" stop-color="#6c879e"/></linearGradient>
<linearGradient id="st2" x1="0" y1="0" x2="1" y2="1"><stop offset="0" stop-color="#62798f"/><stop offset="1" stop-color="#40546a"/></linearGradient>
<linearGradient id="hl" x1="0" y1="0" x2="0" y2="1"><stop offset="0" stop-color="#8fb9ec"/><stop offset="1" stop-color="#79a9e0"/></linearGradient>
<linearGradient id="rarr" gradientUnits="userSpaceOnUse" x1="252" y1="152" x2="266" y2="166"><stop offset="0" stop-color="#d02030"/><stop offset="0.600" stop-color="#d84050"/><stop offset="1" stop-color="#e8a0a8" stop-opacity="0.400"/></linearGradient>
</defs>
<rect x="206.800" y="143" width="31" height="31" fill="url(#hl)"/>
<polygon points="78.200,165 89.200,159.500 100.100,164.400 89.200,171.200" fill="none" stroke="#e04848" stroke-width="1"/>
<polygon points="77.900,155.300 89.200,161.800 100.100,154.800 100.100,153.500 77.900,154" fill="#33465a"/>
<polygon points="77.900,154 89.200,147.800 100.100,153.500 89.200,160.300" fill="url(#st1)"/>
<path d="M101.600,164 V158" stroke="#c01820" stroke-width="1.600"/><polygon points="101.600,154.500 99.300,158.800 103.900,158.800" fill="#d01820"/>
<polygon points="111,156.100 119.300,150.900 127,155.500 119,161" fill="#fff" stroke="#222" stroke-width="0.800"/>
<path d="M114.500,157 C115,155 116.500,154.500 118,155" fill="none" stroke="#d01820" stroke-width="1.300"/>
<polygon points="119.300,155.600 126.100,150.900 127.600,151.400 127.600,157.200 120.900,162.400 119.300,161.300" fill="#5f7990"/>
<polygon points="119.300,155.600 120.600,156.500 120.600,162.200 119.300,161.300" fill="#1f2832"/>
<polygon points="119.300,155.600 126.100,150.900 127.600,151.400 120.600,156.500" fill="#a9c0d0"/>
<polygon points="120.900,162.400 128.700,157.700 136,163.400 128.200,169.100" fill="url(#st1)"/><path d="M120.900,162.400 L128.200,169.100 L136,163.400" fill="none" stroke="#33465a" stroke-width="1"/>
<polygon points="143.800,153 152.600,147.800 161.400,152.500 152.600,157.200" fill="url(#st1)"/>
<polygon points="152.600,157.200 161.400,152.500 161.400,160.300 152.600,165.500" fill="url(#st2)"/>
<polygon points="152.600,165.500 161.400,160.300 170.300,165 161.400,170.700" fill="url(#st1)"/>
<path d="M142.700,153.500 L151.500,158 L151.500,166 L160.500,171.500" fill="none" stroke="#e04848" stroke-width="1.500"/>
<polygon points="178.200,154 188.600,146.800 190.700,147.800 190.700,157.200 180.800,164.400 178.200,161.800" fill="url(#st2)"/>
<polygon points="178.200,154 188.600,146.800 190.700,147.800 180.300,155.200" fill="#a9c0d0"/>
<polygon points="178.200,154 180.300,155.200 180.800,164.400 178.200,161.800" fill="#1f2832"/>
<polygon points="180.800,164.400 190.700,157.200 200.600,164.400 191.200,171.700" fill="url(#st1)"/><path d="M179.500,163.500 L191.200,172.200 L200.600,165" fill="none" stroke="#33465a" stroke-width="1.200"/>
<polygon points="216.700,159.200 232.300,148.300 232.800,158.200 217.800,171.200" fill="#4d6278"/>
<polygon points="217.200,164 225,158.500 232.800,158.200 217.800,171.200" fill="#566c84"/>
<polygon points="214.600,158.700 231.300,147.300 232.800,148.500 216.700,159.800" fill="#a9c0d0"/>
<path d="M215.500,159 V163.500 M216.800,160 V171" stroke="#1f2832" stroke-width="1.300" fill="none"/>
<path d="M215.300,164 V168" stroke="#9fd0f4" stroke-width="0.800"/>
<path d="M242.700,153 L252.600,146.200 C256,150 262,158 268.700,165 L258.800,171.200 L248.400,163.900 C246,160 244,156 242.700,153 Z" fill="#9db4c6"/>
<path d="M242.700,153 C244,156 246,160 248.400,163.900 L258.800,171.200 L268.700,165" fill="none" stroke="#3a4c60" stroke-width="1.300"/>
<path d="M249,158 L251,164" stroke="#7088c0" stroke-width="1.500"/>
<path d="M264.600,164.500 C264,159 260,155.500 255.500,154.500" fill="none" stroke="url(#rarr)" stroke-width="3.200"/>
<polygon points="250.500,152 258.500,151.200 254.500,158" fill="#d02030"/>
</svg><!--/SPAL-->
</body></html>
